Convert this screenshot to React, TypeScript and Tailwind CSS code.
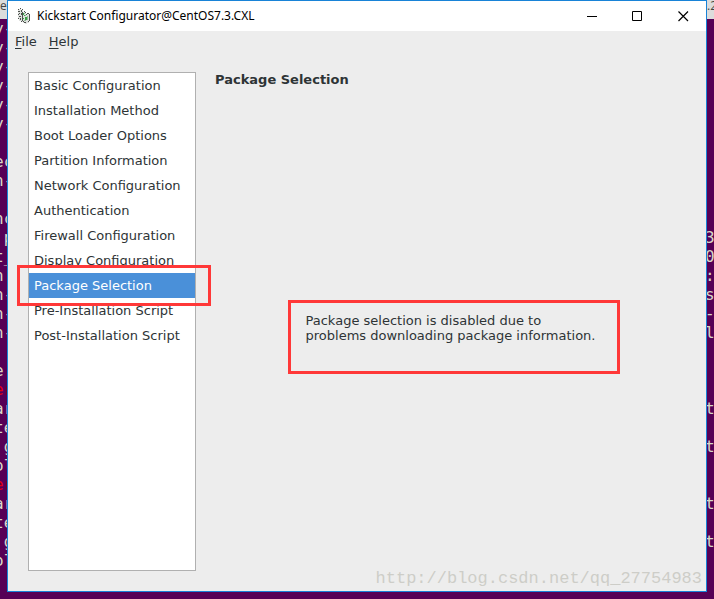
import { useState } from "react";
import { clsx } from "clsx";

const sections = [
  "Basic Configuration",
  "Installation Method",
  "Boot Loader Options",
  "Partition Information",
  "Network Configuration",
  "Authentication",
  "Firewall Configuration",
  "Display Configuration",
  "Package Selection",
  "Pre-Installation Script",
  "Post-Installation Script",
];

// Terminal output that shows on either side of the window
const leftLines = [
  "y-", "y-", "y-", "y-", "y-", "y-", "", "ec", "n-", "", "nc", " p", "t_", "n", "n-",
  "n-", "n-", "", "e", "er", "ar", "te", " g", "ol", "er", "ar", "te", " g", "ol",
];
const rightLines = [
  "", "", "", "", "", "", "", "", "", "", "", "3", "0", ":", "s",
  "-", "l", "", "", "", "t", "", "t", "", "", "t", "", "t", "",
];

interface TerminalStripProps {
  title: string;
  lines: string[];
  lineClass: string;
}

const TerminalStrip = ({ title, lines, lineClass }: TerminalStripProps) => (
  <div className="w-[7px] shrink-0 overflow-hidden font-['DejaVu_Sans_Mono',monospace] text-base leading-[19px] text-[#d8d8c8]">
    <div className="h-[19px] bg-[#dcdcdc] font-['Open_Sans',sans-serif] text-xs leading-3 text-[#444]">
      {title}
    </div>
    {lines.map((line, i) => (
      <div
        key={i}
        className={clsx("h-[19px] whitespace-pre", lineClass, line === "er" && "text-[#e00010]")}
      >
        {line}
      </div>
    ))}
  </div>
);

const AppIcon = () => (
  <svg viewBox="0 0 14 16" className="h-4 w-3.5" shapeRendering="crispEdges" aria-hidden="true">
    <path d="M1 1h3v1h2v2h3v2h3v9h-2v1H8v-1H6v-1H4v-1H2v-2H1z" fill="#dfe1df" />
    <path
      d="M1 1h1v1H1zM3 0h1v1H3zM5 1h1v1H5zM1 3h2v1H1zM4 2h1v2H4zM2 5h1v1H2zM1 6h1v1H1zM4 5h1v2H4zM2 8h2v1H2zM1 10h1v1H1zM3 10h1v2H3zM5 4h1v9H5zM7 3h1v1H7zM8 4h1v1H8zM9 6h1v1H9zM4 13h1v1H4zM6 13h1v1H6zM7 14h2v1H7zM11 13h1v1h-1zM12 6h1v7h-1zM10 5h2v1h-2z"
      fill="#4c504c"
    />
    <path d="M6 5h1v2H6zM7 7h1v1H7zM8 9h2v3H8zM6 10h1v1H6z" fill="#39a347" />
    <path d="M7 5h1v1H7zM8 7h1v1H8zM10 8h1v4h-1zM7 12h2v1H7z" fill="#8fb894" />
  </svg>
);

const TitleBar = () => (
  <header className="flex h-[30px] items-center bg-white pl-[9px] text-black">
    <AppIcon />
    <h1 className="ml-1.5 flex-1 truncate font-['Noto_Sans',sans-serif] text-xs">
      Kickstart Configurator@CentOS7.3.CXL
    </h1>
    <button aria-label="Minimize" className="flex h-full w-[46px] items-center justify-center">
      <svg viewBox="0 0 11 11" className="size-[11px]" shapeRendering="crispEdges">
        <path d="M1 5h10v1H1z" />
      </svg>
    </button>
    <button aria-label="Maximize" className="flex h-full w-[46px] items-center justify-center">
      <svg viewBox="0 0 11 11" className="size-[11px]" fill="none" stroke="black">
        <path d="M.5 .5h9v9h-9z" />
      </svg>
    </button>
    <button aria-label="Close" className="flex h-full w-[46px] items-center justify-center">
      <svg viewBox="0 0 11 11" className="size-[11px]" fill="none" stroke="black" strokeWidth="1.2">
        <path d="M.5 .5l9.5 9.5M10 .5L.5 10" />
      </svg>
    </button>
  </header>
);

const App = () => {
  const [selected, setSelected] = useState("Package Selection");

  return (
    <div className="flex min-h-screen bg-[#560056] pb-[7px]">
      <TerminalStrip title="ec" lines={leftLines} lineClass="-ml-1.5" />

      <div className="relative flex min-w-0 flex-1 flex-col border border-[#1883d7] bg-[#ededed] font-['DejaVu_Sans',sans-serif] text-[13px] leading-[15px] text-[#2e3436]">
        <TitleBar />

        {/* Menu bar */}
        <nav className="flex gap-3 px-[7px] pt-[3px] pb-[23px]">
          <button>
            <span className="underline underline-offset-2">F</span>ile
          </button>
          <button>
            <span className="underline underline-offset-2">H</span>elp
          </button>
        </nav>

        <div className="flex flex-1 gap-[19px] px-5 pb-5">
          {/* Section list */}
          <ul className="w-42 shrink-0 border border-[#b0b0b0] bg-white">
            {sections.map((section) => (
              <li key={section} className="relative">
                <button
                  onClick={() => setSelected(section)}
                  className={clsx(
                    "block h-[25px] w-full px-[5px] text-left whitespace-nowrap",
                    section === selected && "bg-[#4a90d9] text-white",
                  )}
                >
                  {section}
                </button>
                {section === "Package Selection" && (
                  <div className="pointer-events-none absolute -inset-x-3 -inset-y-2 z-10 -mr-1 border-3 border-[#ff3838]" />
                )}
              </li>
            ))}
          </ul>

          <main className="flex min-w-0 flex-1 flex-col">
            <h2 className="mb-4 font-bold">{selected}</h2>
            <div className="flex flex-1 items-center justify-center pl-1.5">
              <p className="w-[332px] border-3 border-[#ff3838] px-[15px] pt-2.5 pb-7">
                Package selection is disabled due to problems downloading package information.
              </p>
            </div>
          </main>
        </div>

        {/* Watermark */}
        <span className="absolute right-1 bottom-0 font-['Liberation_Mono',monospace] text-[17px] leading-6 text-[#cdcdc8]">
          http://blog.csdn.net/qq_27754983
        </span>
      </div>

      <TerminalStrip title=".2" lines={rightLines} lineClass="-ml-0.5" />
    </div>
  );
};

export default App;
